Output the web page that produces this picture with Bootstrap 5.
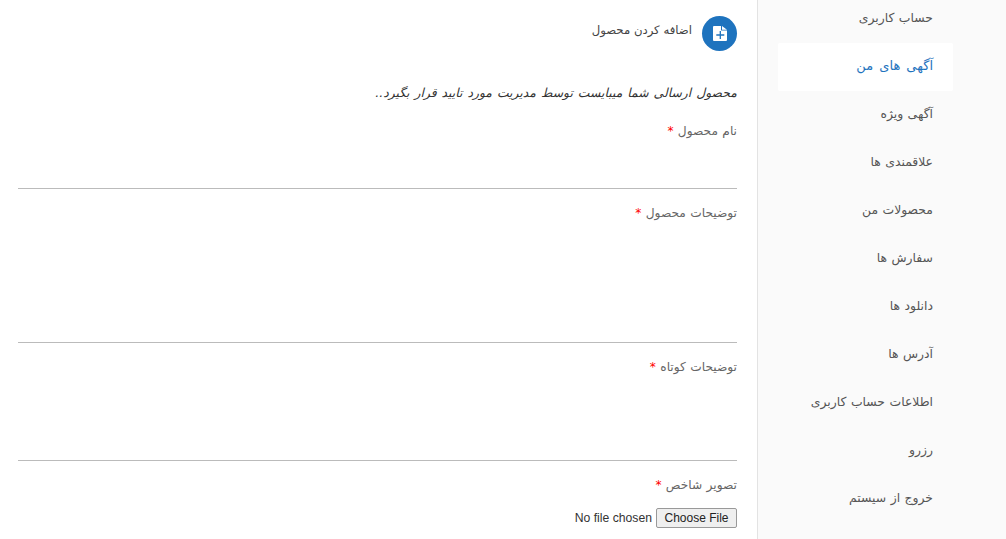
<!DOCTYPE html>
<html lang="fa" dir="rtl">
<head>
    <meta charset="UTF-8">
    <meta name="viewport" content="width=device-width, initial-scale=1.0">
    <title>افزودن محصول</title>
    <link href="https://cdn.jsdelivr.net/npm/bootstrap@5.3.3/dist/css/bootstrap.min.css" rel="stylesheet">
    <style>
        html, body {
            height: 539px;
            overflow: hidden;
        }
        body {
            background: #fff;
            color: #555;
            font-family: "DejaVu Sans", "Noto Sans", sans-serif;
            font-size: 12px;
        }
        .shell {
            width: 1006px;
            height: 539px;
        }
        .side-panel {
            width: 249px;
            background: #fafafa;
            border-left: 1px solid #e3e3e3;
            padding: 0 53px 0 20px;
        }
        .side-panel a {
            display: block;
            height: 48px;
            line-height: 46px;
            width: 175px;
            padding-right: 20px;
            color: #555;
            text-decoration: none;
            border-radius: 2px;
            white-space: nowrap;
            font-size: 12.4px;
            word-spacing: 0.5px;
        }
        .side-panel a.on {
            background: #fff;
            color: #1e73be;
            font-size: 13px;
            word-spacing: 2px;
        }
        .side-list {
            margin-top: -5px;
        }
        .form-pane {
            width: 719px;
            margin-right: 20px;
        }
        .pane-head {
            height: 35px;
            margin-top: 16px;
            color: #444;
            font-size: 11.7px;
            gap: 10px;
        }
        .pane-head-text {
            padding-bottom: 6px;
        }
        .head-icon {
            width: 35px;
            height: 35px;
            border-radius: 50%;
            background: #1e73be;
        }
        .pane-note {
            margin: 33px 0 0;
            height: 39px;
            font-size: 12.4px;
            font-style: italic;
            color: #333;
            word-spacing: 1px;
        }
        .field-label {
            display: block;
            margin: 0;
            height: 20px;
            line-height: 16px;
            font-size: 12.2px;
            color: #666;
            word-spacing: 0.5px;
        }
        .field-label b {
            color: #f00;
            font-weight: 400;
        }
        .field-line {
            border-bottom: 1px solid #bbb;
            margin-bottom: 16px;
        }
        .h-name { height: 46px; }
        .h-desc { height: 118px; }
        .h-short { height: 82px; }
        .file-pick {
            font-family: "Liberation Sans", sans-serif;
            font-size: 12.2px;
            color: #333;
            margin-top: 11px;
            display: block;
            width: 100%;
        }
        .file-pick::file-selector-button {
            font-size: 12px;
            height: 20px;
            padding: 0 7.500px;
            margin-inline-end: 4px;
            background: #efefef;
            border: 1px solid #999;
            border-radius: 2px;
            color: #222;
        }
    </style>
</head>
<body>
    <div class="shell d-flex">
        <aside class="side-panel flex-shrink-0">
            <nav class="side-list">
                <a href="#">حساب کاربری</a>
                <a href="#" class="on">آگهی های من</a>
                <a href="#">آگهی ویژه</a>
                <a href="#">علاقمندی ها</a>
                <a href="#">محصولات من</a>
                <a href="#">سفارش ها</a>
                <a href="#">دانلود ها</a>
                <a href="#">آدرس ها</a>
                <a href="#">اطلاعات حساب کاربری</a>
                <a href="#">رزرو</a>
                <a href="#">خروج از سیستم</a>
            </nav>
        </aside>
        <main class="form-pane flex-shrink-0">
            <div class="pane-head d-flex align-items-center">
                <span class="head-icon d-flex align-items-center justify-content-center">
                    <svg width="14" height="15" viewBox="0 0 14 15">
                        <path fill="#fff" d="M0 1A1 1 0 0 1 1 0H8V4.600H14V14A1 1 0 0 1 13 15H1A1 1 0 0 1 0 14Z"/>
                        <path fill="#fff" d="M9 0 14 3.700H9Z"/>
                        <path stroke="#1e73be" stroke-width="1.300" fill="none" d="M7.300 5V13M3.300 9H11.300"/>
                    </svg>
                </span>
                <span class="pane-head-text">اضافه کردن محصول</span>
            </div>
            <p class="pane-note">محصول ارسالی شما میبایست توسط مدیریت مورد تایید قرار بگیرد..</p>
            <label class="field-label">نام محصول <b>*</b></label>
            <div class="field-line h-name"></div>
            <label class="field-label">توضیحات محصول <b>*</b></label>
            <div class="field-line h-desc"></div>
            <label class="field-label">توضیحات کوتاه <b>*</b></label>
            <div class="field-line h-short"></div>
            <label class="field-label">تصویر شاخص <b>*</b></label>
            <input type="file" class="file-pick">
        </main>
    </div>
    <script src="https://cdn.jsdelivr.net/npm/bootstrap@5.3.3/dist/js/bootstrap.bundle.min.js"></script>
</body>
</html>
